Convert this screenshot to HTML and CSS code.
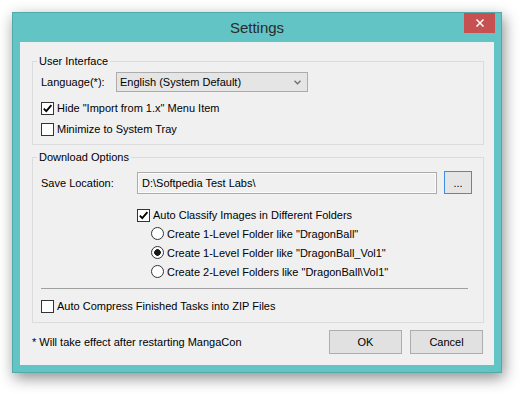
FILE: index.html
```html
<!DOCTYPE html>
<html lang="en">
<head>
    <meta charset="UTF-8">
    <title>Settings</title>
    <link rel="stylesheet" href="styles.css">
</head>
<body>
    <div class="window">
        <div class="titlebar">
            <span class="title">Settings</span>
            <button class="close" type="button">
                <svg width="8" height="8" viewBox="0 0 8 8"><path d="M0.5 0.5 L7.5 7.5 M7.5 0.5 L0.5 7.5" stroke="#fff" stroke-width="1.5" fill="none"/></svg>
            </button>
        </div>
        <div class="client">
            <!-- User Interface group -->
            <fieldset class="group group-ui">
                <legend>User Interface</legend>
                <div class="row">
                    <span class="field-label">Language(*):</span>
                    <div class="combo">
                        <span>English (System Default)</span>
                        <svg width="7" height="5" viewBox="0 0 7 5"><path d="M0.5 0.8 L3.5 3.8 L6.5 0.8" stroke="#6d6d6d" stroke-width="1.3" fill="none"/></svg>
                    </div>
                </div>
                <label class="check">
                    <span class="box"><svg width="11" height="11" viewBox="0 0 11 11"><path d="M1.8 5.6 L4.3 8.2 L9.4 2.2" stroke="#000" stroke-width="1.8" fill="none"/></svg></span>
                    Hide "Import from 1.x" Menu Item
                </label>
                <label class="check">
                    <span class="box"></span>
                    Minimize to System Tray
                </label>
            </fieldset>

            <!-- Download Options group -->
            <fieldset class="group group-dl">
                <legend>Download Options</legend>
                <div class="row">
                    <span class="field-label">Save Location:</span>
                    <div class="path">D:\Softpedia Test Labs\</div>
                    <button class="browse" type="button">...</button>
                </div>
                <div class="classify">
                    <label class="check">
                        <span class="box"><svg width="11" height="11" viewBox="0 0 11 11"><path d="M1.8 5.6 L4.3 8.2 L9.4 2.2" stroke="#000" stroke-width="1.8" fill="none"/></svg></span>
                        Auto Classify Images in Different Folders
                    </label>
                    <div class="radios">
                        <label class="radio"><span class="dot"></span>Create 1-Level Folder like "DragonBall"</label>
                        <label class="radio"><span class="dot on"></span>Create 1-Level Folder like "DragonBall_Vol1"</label>
                        <label class="radio"><span class="dot"></span>Create 2-Level Folders like "DragonBall\Vol1"</label>
                    </div>
                </div>
                <hr class="sep">
                <label class="check">
                    <span class="box"></span>
                    Auto Compress Finished Tasks into ZIP Files
                </label>
            </fieldset>

            <div class="footer">
                <span class="note">* Will take effect after restarting MangaCon</span>
                <div class="actions">
                    <button class="btn" type="button">OK</button>
                    <button class="btn" type="button">Cancel</button>
                </div>
            </div>
        </div>
    </div>
</body>
</html>
```

FILE: styles.css
```css
html {
    height: 100%;
}
body {
    margin: 0;
    min-height: 100%;
    background-color: #fff;
    font-family: "Liberation Sans", Arial, sans-serif;
    font-size: 11px;
    color: #000;
}

.window {
    margin: 12px 0 0 12px;
    width: 490px;
    height: 361px;
    box-sizing: border-box;
    border: 1px solid #52abab;
    background-color: #62c4c4;
    box-shadow: 2px 5px 14px rgba(0, 0, 0, 0.45);
    display: flex;
    flex-direction: column;
}

.titlebar {
    height: 29px;
    display: grid;
    grid-template-columns: 1fr auto 1fr;
}
.titlebar .title {
    grid-column: 2;
    font-size: 15px;
    line-height: 29px;
    color: #2b2b2b;
}
.titlebar .close {
    grid-column: 3;
    justify-self: end;
    align-self: start;
    width: 31px;
    height: 20px;
    margin-right: 6px;
    padding: 0;
    border: none;
    background-color: #c75050;
    display: flex;
    align-items: center;
    justify-content: center;
}

.client {
    flex: 1;
    margin: 0 7px 7px;
    padding: 11px 10px 0 12px;
    background-color: #f0f0f0;
    display: flex;
    flex-direction: column;
}

/* group boxes */
.group {
    margin: 0;
    min-width: 0;
    border: 1px solid #dcdcdc;
}
.group legend {
    padding: 0 2px;
    margin-left: -4px;
    line-height: 16px;
}
.group-ui {
    padding: 3px 8px 5px;
}
.group-dl {
    margin-top: 4px;
    padding: 6px 8px 6px;
}

.row {
    display: flex;
    align-items: center;
}
.group-ui .field-label {
    width: 75px;
}
.group-dl .field-label {
    width: 96px;
}

.combo {
    width: 192px;
    height: 20px;
    box-sizing: border-box;
    border: 1px solid #acacac;
    background-color: #e5e5e5;
    padding: 0 6px 0 3px;
    display: flex;
    align-items: center;
    justify-content: space-between;
}

.check {
    height: 20px;
    display: flex;
    align-items: center;
    gap: 3px;
}
.group-ui .check:first-of-type {
    margin-top: 6px;
}
.group-ui .check + .check {
    margin-top: 1px;
}
.box {
    width: 13px;
    height: 13px;
    box-sizing: border-box;
    border: 1px solid #333;
    background-color: #fff;
    display: flex;
    align-items: center;
    justify-content: center;
}

.path {
    width: 300px;
    height: 22px;
    box-sizing: border-box;
    border: 1px solid #ababab;
    box-shadow: inset 0 0 0 1px #fbfbfb;
    background-color: #f0f0f0;
    padding-left: 4px;
    display: flex;
    align-items: center;
}
.browse {
    width: 28px;
    height: 23px;
    margin-left: 7px;
    padding: 0;
    border: 1px solid #3c8fe0;
    background-color: #e5e5e5;
    font: inherit;
    color: #000;
}

.classify {
    margin: 12px 0 0 96px;
}
.classify .check {
    height: 18px;
}
.radios {
    margin-left: 14px;
}
.radio {
    height: 19px;
    display: flex;
    align-items: center;
    gap: 3px;
}
.dot {
    width: 13px;
    height: 13px;
    box-sizing: border-box;
    border: 1px solid #333;
    border-radius: 50%;
    background-color: #fff;
}
.dot.on {
    background: radial-gradient(circle, #1a1a1a 0 3px, #fff 3.6px);
}

.sep {
    margin: 7px 7px 7px 0;
    height: 0;
    border: none;
    border-top: 1px solid #a0a0a0;
}

.footer {
    margin-top: 7px;
    display: flex;
    align-items: center;
    justify-content: space-between;
}
.actions {
    display: flex;
    gap: 8px;
    margin-right: 1px;
}
.btn {
    width: 73px;
    height: 24px;
    padding: 0;
    border: 1px solid #adadad;
    background-color: #e1e1e1;
    font: inherit;
    color: #000;
}
```
